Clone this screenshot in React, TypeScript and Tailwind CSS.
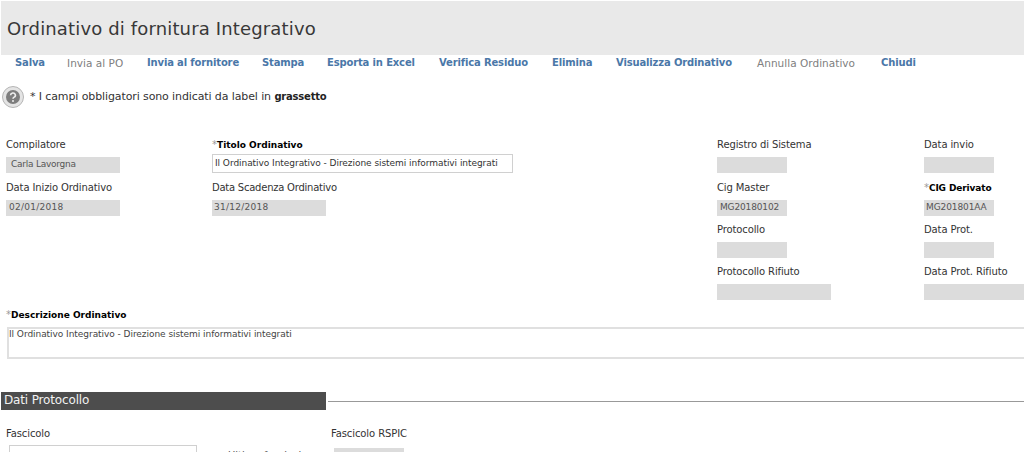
import type { ReactNode } from "react";

const actions = [
  { name: "Salva", w: "w-[52px]" },
  { name: "Invia al PO", off: true, w: "w-[80px]" },
  { name: "Invia al fornitore", w: "w-[115px]" },
  { name: "Stampa", w: "w-[65px]" },
  { name: "Esporta in Excel", w: "w-[112px]" },
  { name: "Verifica Residuo", w: "w-[113px]" },
  { name: "Elimina", w: "w-[64px]" },
  { name: "Visualizza Ordinativo", w: "w-[141px]" },
  { name: "Annulla Ordinativo", off: true, w: "w-[124px]" },
  { name: "Chiudi", w: "w-[60px]" },
];

const Required = ({ label }: { label: string }) => (
  <b className="text-[9px] text-black">
    <span className="text-[10px] font-normal text-[#999]">*</span>
    {label}
  </b>
);

const Field = ({
  label,
  required,
  value,
  boxClass,
  className,
  labelClass,
}: {
  label: string;
  required?: boolean;
  value?: string;
  boxClass: string;
  className?: string;
  labelClass?: string;
}) => (
  <div className={className}>
    <div className={`h-[16px] whitespace-nowrap text-[10px] leading-[16px] text-[#333] ${labelClass ?? "tracking-[-0.12px]"}`}>
      {required ? <Required label={label} /> : label}
    </div>
    <div
      className={`mt-[4px] flex h-[16px] items-center overflow-hidden whitespace-nowrap bg-[#dcdcdc] text-[9px] text-[#555] ${boxClass}`}
    >
      {value}
    </div>
  </div>
);

const Row = ({ children, className }: { children: ReactNode; className?: string }) => (
  <div className={`flex ${className ?? ""}`}>{children}</div>
);

export default function App() {
  return (
    <div className="h-[452px] w-[1024px] overflow-hidden bg-white font-['DejaVu_Sans',sans-serif]">
      <div className="ml-px mt-px flex h-[54px] items-center bg-[#e9e9e9] pl-[6px]">
        <h1 className="text-[18px] tracking-[0.15px] text-[#383838]">Ordinativo di fornitura Integrativo</h1>
      </div>

      <nav className="flex h-[16px] pl-[15px] text-[10.5px] leading-[16px]">
        {actions.map((a) => (
          <span
            key={a.name}
            className={`shrink-0 whitespace-nowrap ${a.w} ${
              a.off ? "text-[#808080] tracking-[0.03px]" : "text-[10px] font-bold tracking-[-0.15px] text-[#4a77a8]"
            }`}
          >
            {a.name}
          </span>
        ))}
      </nav>

      <div className="ml-[2px] mt-[14px] flex h-[24px] items-center">
        <svg width="22" height="22" viewBox="0 0 22 22">
          <circle cx="11" cy="11" r="10.5" fill="#e4e4e4" stroke="#b5b5b5" />
          <circle cx="11" cy="11" r="7" fill="#7d7d7d" />
          <path d="M8.6 9.2a2.4 2.2 0 1 1 3.6 1.9c-.8.5-1.2.9-1.2 1.7" fill="none" stroke="#eee" strokeWidth="1.6" />
          <circle cx="11" cy="15" r="1" fill="#eee" />
        </svg>
        <p className="ml-[6px] whitespace-nowrap text-[11px] tracking-[-0.11px] text-[#333]">
          * I campi obbligatori sono indicati da label in{" "}
          <b className="text-[10px] tracking-[-0.2px] text-[#222]">grassetto</b>
        </p>
      </div>

      <div className="mt-[28px] h-[170px] pl-[6px]">
        <Row>
          <Field label="Compilatore" value="Carla Lavorgna" boxClass="w-[114px] pl-[5px] tracking-[-0.25px]" className="w-[206px]" />
          <div className="w-[505px]">
            <div className="h-[16px] text-[10px] leading-[16px]">
              <Required label="Titolo Ordinativo" />
            </div>
            <div className="mt-[1px] flex h-[19px] w-[301px] items-center whitespace-nowrap border border-[#d0d0d0] pl-[2px] text-[9px] tracking-[-0.05px] text-[#333]">
              Il Ordinativo Integrativo - Direzione sistemi informativi integrati
            </div>
          </div>
          <Field label="Registro di Sistema" boxClass="w-[70px]" className="w-[207px]" />
          <Field label="Data invio" boxClass="w-[70px]" />
        </Row>
        <Row className="mt-[7px]">
          <Field label="Data Inizio Ordinativo" value="02/01/2018" boxClass="w-[114px] pl-[3px] tracking-[0.25px]" className="w-[206px]" />
          <Field label="Data Scadenza Ordinativo" labelClass="tracking-[-0.24px]" value="31/12/2018" boxClass="w-[114px] pl-[2px] tracking-[0.25px]" className="w-[505px]" />
          <Field label="Cig Master" value="MG20180102" boxClass="w-[70px] pl-[3px] tracking-[-0.15px]" className="w-[207px]" />
          <Field required label="CIG Derivato" value="MG201801AA" boxClass="w-[70px] pl-[2px] tracking-[-0.1px]" />
        </Row>
        <Row className="ml-[711px] mt-[6px]">
          <Field label="Protocollo" boxClass="w-[70px]" className="w-[207px]" />
          <Field label="Data Prot." boxClass="w-[70px]" />
        </Row>
        <Row className="ml-[711px] mt-[6px]">
          <Field label="Protocollo Rifiuto" boxClass="w-[114px]" className="w-[207px]" />
          <Field label="Data Prot. Rifiuto" boxClass="w-[100px]" />
        </Row>
      </div>

      <div className="pl-[6px]">
        <div className="h-[16px] text-[10px] leading-[16px]">
          <Required label="Descrizione Ordinativo" />
        </div>
        <div className="ml-px mt-[4px] h-[32px] whitespace-nowrap border-2 border-r-0 border-[#e0e0e0] text-[9px] leading-[10px] tracking-[-0.05px] text-[#444]">
          Il Ordinativo Integrativo - Direzione sistemi informativi integrati
        </div>
      </div>

      <div className="ml-px mt-[33px] flex items-center">
        <h2 className="h-[18px] w-[325px] bg-[#4d4d4d] pl-[3px] text-[12px] leading-[17px] tracking-[-0.15px] text-[#f2f2f2]">
          Dati Protocollo
        </h2>
        <div className="ml-[2px] h-px flex-1 bg-[#999]" />
      </div>

      <div className="mt-[16px] flex pl-[6px]">
        <div className="w-[222px]">
          <div className="h-[16px] text-[10px] leading-[16px] tracking-[-0.1px] text-[#333]">Fascicolo</div>
          <div className="ml-[3px] mt-[3px] h-[20px] w-[188px] border border-[#d0d0d0]" />
        </div>
        <div className="w-[103px] whitespace-nowrap pt-[22px] text-[10px] text-[#555]">Ultimo fascicolo</div>
        <div>
          <div className="h-[16px] text-[10px] leading-[16px] tracking-[-0.1px] text-[#333]">Fascicolo RSPIC</div>
          <div className="ml-[3px] mt-[6px] h-[16px] w-[70px] bg-[#dcdcdc]" />
        </div>
      </div>
    </div>
  );
}
